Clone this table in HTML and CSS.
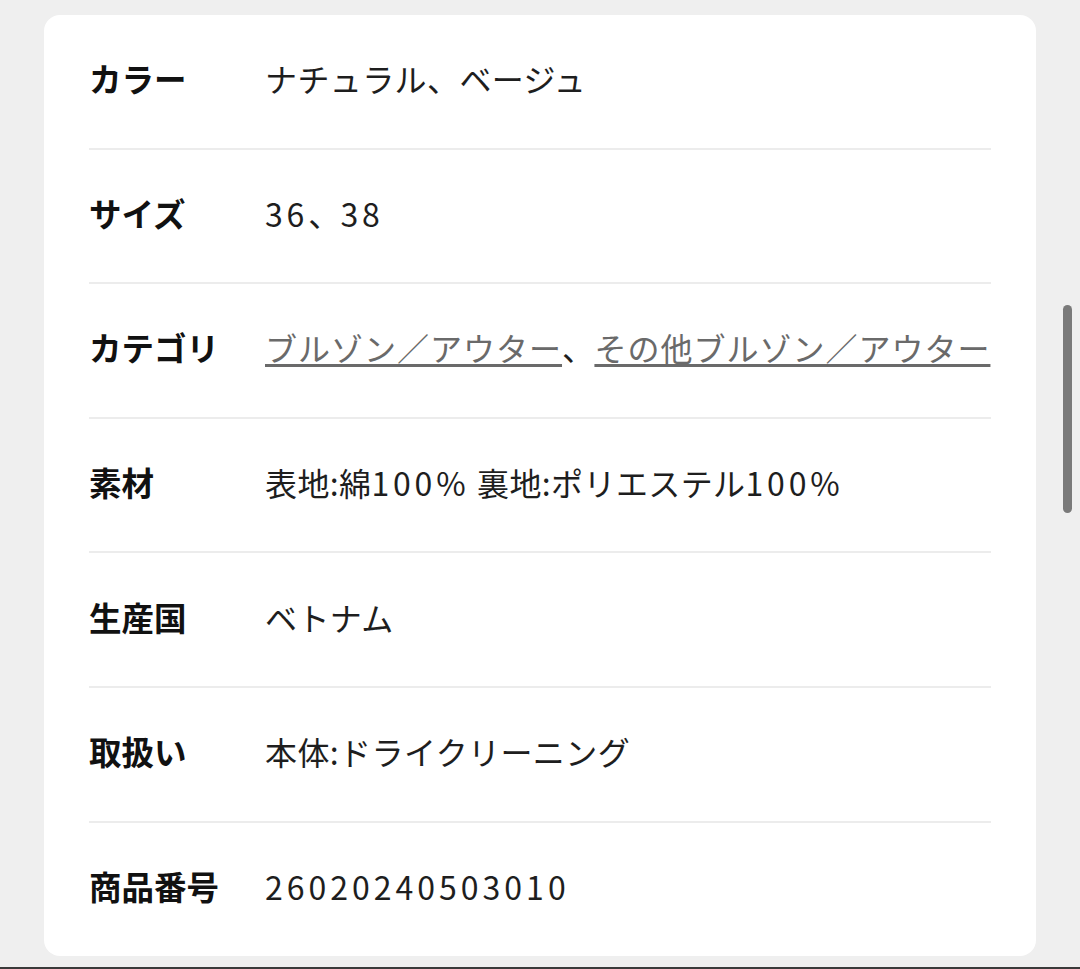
FILE: index.html
```html
<!DOCTYPE html>
<html lang="ja">
<head>
<meta charset="utf-8">
<link rel="stylesheet" href="styles.css">
</head>
<body>
<div class="page">
  <div class="card">
    <dl class="specs">
      <div class="row"><dt>カラー</dt><dd>ナチュラル、ベージュ</dd></div>
      <div class="row"><dt>サイズ</dt><dd><span class="num">36</span>、<span class="num">38</span></dd></div>
      <div class="row"><dt>カテゴリ</dt><dd><a class="link" href="#">ブルゾン／アウター</a>、<a class="link" href="#">その他ブルゾン／アウター</a></dd></div>
      <div class="row"><dt>素材</dt><dd>表地:綿<span class="num">100%</span> 裏地:ポリエステル<span class="num">100%</span></dd></div>
      <div class="row"><dt>生産国</dt><dd>ベトナム</dd></div>
      <div class="row"><dt>取扱い</dt><dd>本体:ドライクリーニング</dd></div>
      <div class="row"><dt>商品番号</dt><dd><span class="num num-long">26020240503010</span></dd></div>
    </dl>
  </div>
  <div class="spacer"></div>
  <div class="bottom-bar"></div>
</div>
<div class="scrollbar"></div>
</body>
</html>
```
FILE: styles.css
```css
html, body {
  margin: 0;
  padding: 0;
  height: 100%;
  background: #efefef;
}
body {
  font-family: "Noto Sans CJK JP", "Noto Sans", sans-serif;
  color: #1a1a1a;
}
.page {
  display: flex;
  flex-direction: column;
  height: 969px;
  box-sizing: border-box;
  padding-top: 15px;
}
.card {
  margin: 0 44px;
  background: #ffffff;
  border-radius: 16px;
  padding: 0 45px;
}
.specs {
  margin: 0;
}
.row {
  display: flex;
  align-items: center;
  height: 134.6px;
  box-sizing: border-box;
  padding-bottom: 6px;
  border-bottom: 2px solid #ececec;
}
.row:last-child {
  border-bottom: none;
  height: 133px;
}
dt {
  width: 176px;
  flex: none;
  font-weight: 700;
  font-size: 32.5px;
  line-height: 48px;
  color: #111;
}
dd {
  margin: 0;
  font-size: 32px;
  line-height: 48px;
  letter-spacing: 0.4px;
  color: #1e1e1e;
  white-space: nowrap;
}
.num {
  letter-spacing: 3.8px;
}
.num-long {
  letter-spacing: 4px;
}
.link {
  color: #6a6a6a;
  letter-spacing: 1px;
  text-decoration: underline;
  text-decoration-thickness: 3px;
  text-underline-offset: 3px;
}
.spacer {
  flex: 1;
}
.bottom-bar {
  height: 2px;
  background: #3a3a3a;
}
.scrollbar {
  position: absolute;
  left: 1063px;
  top: 305px;
  width: 9px;
  height: 208px;
  border-radius: 5px;
  background: #7a7a7a;
}
```
